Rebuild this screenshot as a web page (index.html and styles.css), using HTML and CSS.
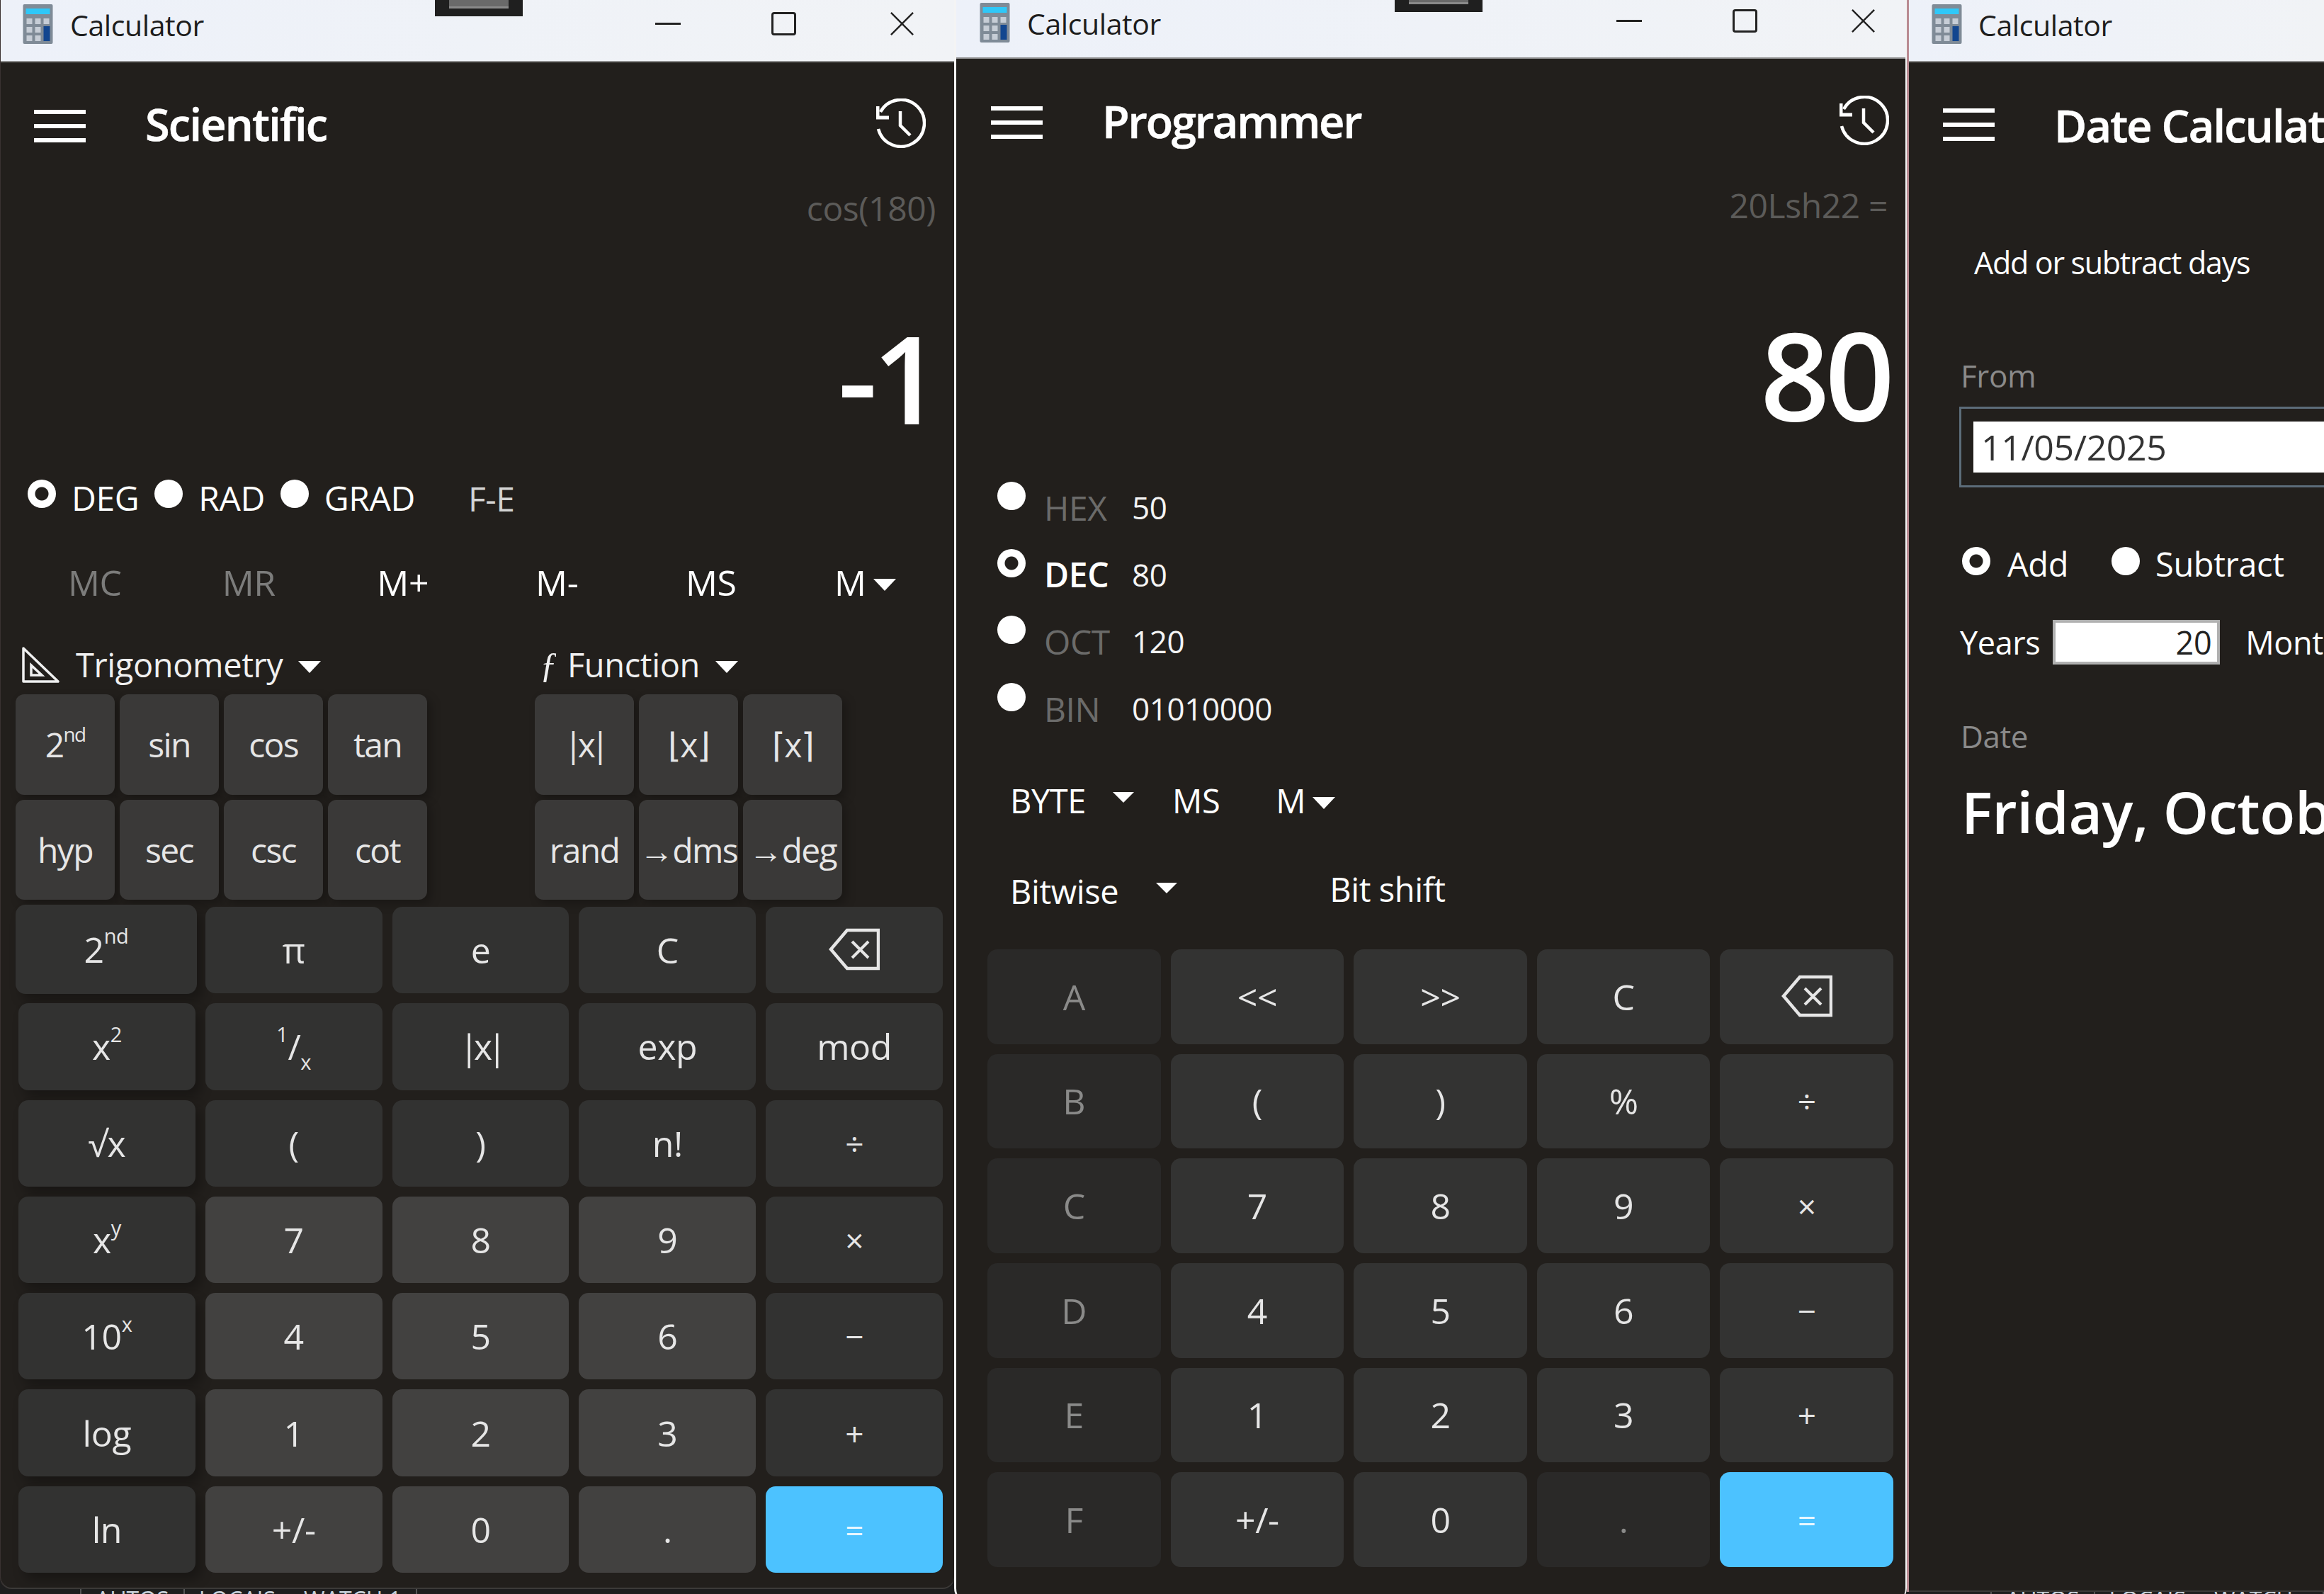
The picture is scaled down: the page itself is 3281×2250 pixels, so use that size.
FILE: index.html
```html
<!DOCTYPE html>
<html lang="en">
<head>
<meta charset="utf-8">
<title>Calculator</title>
<link rel="stylesheet" href="styles.css">
</head>
<body>
<svg class="defs" width="0" height="0" aria-hidden="true">
  <defs>
    <symbol id="i-calc" viewBox="0 0 42 56">
      <rect width="42" height="56" rx="2" fill="#7f8b97"/>
      <rect x="4" y="6" width="34" height="8" fill="#2fc8f8"/>
      <g fill="#c6cdd6">
        <rect x="5" y="20" width="8" height="8"/><rect x="17" y="20" width="8" height="8"/><rect x="29" y="20" width="8" height="8"/>
        <rect x="5" y="32" width="8" height="8"/><rect x="17" y="32" width="8" height="8"/>
        <rect x="5" y="44" width="8" height="8"/><rect x="17" y="44" width="8" height="8"/>
      </g>
      <rect x="29" y="31" width="9" height="21" fill="#12468f"/>
    </symbol>
    <symbol id="i-history" viewBox="0 0 70 70">
      <g fill="none" stroke="#fff" stroke-width="4.5">
        <path d="M6 19A33 33 0 1 1 3 43"/>
        <path d="M2 11V27H18" stroke-width="5"/>
        <path d="M34 18V38L48 52"/>
      </g>
    </symbol>
    <symbol id="i-back" viewBox="0 0 72 60">
      <g fill="none" stroke="#e6e6e6" stroke-width="4.5">
        <path d="M70 3V57H26L3 30 26 3Z"/>
        <path d="M33 19L56 42M56 19L33 42" stroke-width="4"/>
      </g>
    </symbol>
    <symbol id="i-trig" viewBox="0 0 55 53">
      <g fill="none" stroke="#f0f0f0" stroke-width="3.5">
        <path d="M3 3L52 50H3Z" stroke-linejoin="round"/>
        <path d="M14 27L29 41H14Z"/>
      </g>
    </symbol>
  </defs>
</svg>

<main class="desktop">
  <div class="behind behind-a"><span class="pipe"></span><span>AUTOS</span><span class="pipe"></span><span>LOCAIS</span><span class="watch">WATCH 1</span><span class="pipe"></span></div>
  <div class="behind behind-c"><span class="pipe"></span><span>AUTOS</span><span class="pipe"></span><span>LOCAIS</span><span class="watch">WATCH 1</span><span class="pipe"></span></div>

  <!-- Scientific -->
  <section class="win win-sci">
    <header class="titlebar tb-88">
      <svg class="app-icon"><use href="#i-calc"/></svg>
      <span class="app-name">Calculator</span>
      <span class="notch"><i></i></span>
      <span class="caption"><i class="cap-min"></i><i class="cap-max"></i><svg class="cap-close" viewBox="0 0 36 36"><path d="M1 1L35 35M35 1L1 35"/></svg></span>
    </header>
    <div class="head head-sci">
      <span class="burger"><i></i><i></i><i></i></span>
      <h1 class="mode">Scientific</h1>
      <svg class="history"><use href="#i-history"/></svg>
    </div>
    <div class="expr expr-sci">cos(180)</div>
    <div class="display display-sci">-1</div>
    <div class="angle">
      <span class="radio on"></span><span>DEG</span>
      <span class="radio"></span><span>RAD</span>
      <span class="radio"></span><span>GRAD</span>
      <span class="fe">F-E</span>
    </div>
    <div class="memory">
      <span class="dim">MC</span><span class="dim">MR</span><span>M+</span><span>M-</span><span>MS</span><span>M<i class="caret caret-m"></i></span>
    </div>
    <div class="menus">
      <span class="menu"><svg class="trig-icon"><use href="#i-trig"/></svg>Trigonometry<i class="caret"></i></span>
      <span class="menu"><em class="fn">ƒ</em>Function<i class="caret"></i></span>
    </div>
    <div class="flyouts">
      <div class="fly fly-4">
        <button class="fkey">2<sup>nd</sup></button><button class="fkey">sin</button><button class="fkey">cos</button><button class="fkey">tan</button>
        <button class="fkey">hyp</button><button class="fkey">sec</button><button class="fkey">csc</button><button class="fkey">cot</button>
      </div>
      <div class="fly fly-3">
        <button class="fkey abs">|x|</button><button class="fkey">⌊x⌋</button><button class="fkey">⌈x⌉</button>
        <button class="fkey">rand</button><button class="fkey">→dms</button><button class="fkey">→deg</button>
      </div>
    </div>
    <div class="keys keys-sci">
      <button class="key fn1 pop">2<sup>nd</sup></button><button class="key">π</button><button class="key">e</button><button class="key">C</button><button class="key"><svg class="back"><use href="#i-back"/></svg></button>
      <button class="key fn1">x<sup>2</sup></button><button class="key"><sup>1</sup>/<sub>x</sub></button><button class="key abs">|x|</button><button class="key">exp</button><button class="key">mod</button>
      <button class="key fn1">√x</button><button class="key">(</button><button class="key">)</button><button class="key">n!</button><button class="key op">÷</button>
      <button class="key fn1">x<sup>y</sup></button><button class="key num">7</button><button class="key num">8</button><button class="key num">9</button><button class="key op">×</button>
      <button class="key fn1">10<sup>x</sup></button><button class="key num">4</button><button class="key num">5</button><button class="key num">6</button><button class="key op">−</button>
      <button class="key fn1">log</button><button class="key num">1</button><button class="key num">2</button><button class="key num">3</button><button class="key op">+</button>
      <button class="key fn1">ln</button><button class="key num">+/-</button><button class="key num">0</button><button class="key num">.</button><button class="key eq">=</button>
    </div>
  </section>

  <!-- Programmer -->
  <section class="win win-prog">
    <header class="titlebar tb-83">
      <svg class="app-icon"><use href="#i-calc"/></svg>
      <span class="app-name">Calculator</span>
      <span class="notch"><i></i></span>
      <span class="caption"><i class="cap-min"></i><i class="cap-max"></i><svg class="cap-close" viewBox="0 0 36 36"><path d="M1 1L35 35M35 1L1 35"/></svg></span>
    </header>
    <div class="head head-prog">
      <span class="burger"><i></i><i></i><i></i></span>
      <h1 class="mode">Programmer</h1>
      <svg class="history"><use href="#i-history"/></svg>
    </div>
    <div class="expr expr-prog">20Lsh22 =</div>
    <div class="display display-prog">80</div>
    <div class="radix">
      <div class="radix-row"><span class="radio"></span><span class="radix-name">HEX</span><span class="radix-val">50</span></div>
      <div class="radix-row"><span class="radio on"></span><span class="radix-name cur">DEC</span><span class="radix-val">80</span></div>
      <div class="radix-row"><span class="radio"></span><span class="radix-name">OCT</span><span class="radix-val">120</span></div>
      <div class="radix-row"><span class="radio"></span><span class="radix-name">BIN</span><span class="radix-val">01010000</span></div>
    </div>
    <div class="word">
      <span>BYTE</span><i class="caret caret-s"></i><span class="word-ms">MS</span><span class="word-m">M</span><i class="caret caret-m"></i>
    </div>
    <div class="bits">
      <span>Bitwise</span><i class="caret caret-s"></i><span class="bit-shift">Bit shift</span>
    </div>
    <div class="keys keys-prog">
      <button class="key pkey off">A</button><button class="key pkey">&lt;&lt;</button><button class="key pkey">&gt;&gt;</button><button class="key pkey">C</button><button class="key pkey"><svg class="back"><use href="#i-back"/></svg></button>
      <button class="key pkey off">B</button><button class="key pkey">(</button><button class="key pkey">)</button><button class="key pkey">%</button><button class="key pkey op">÷</button>
      <button class="key pkey off">C</button><button class="key pkey">7</button><button class="key pkey">8</button><button class="key pkey">9</button><button class="key pkey op">×</button>
      <button class="key pkey off">D</button><button class="key pkey">4</button><button class="key pkey">5</button><button class="key pkey">6</button><button class="key pkey op">−</button>
      <button class="key pkey off">E</button><button class="key pkey">1</button><button class="key pkey">2</button><button class="key pkey">3</button><button class="key pkey op">+</button>
      <button class="key pkey off">F</button><button class="key pkey">+/-</button><button class="key pkey">0</button><button class="key pkey off">.</button><button class="key eq">=</button>
    </div>
  </section>

  <!-- Date calculation -->
  <section class="win win-date">
    <header class="titlebar tb-88">
      <svg class="app-icon"><use href="#i-calc"/></svg>
      <span class="app-name">Calculator</span>
    </header>
    <div class="head head-date">
      <span class="burger"><i></i><i></i><i></i></span>
      <h1 class="mode">Date Calculation</h1>
    </div>
    <div class="date-mode">Add or subtract days</div>
    <div class="date-label date-from">From</div>
    <div class="date-field"><span class="date-input">11/05/2025</span></div>
    <div class="addsub">
      <span class="radio on"></span><span>Add</span>
      <span class="radio"></span><span>Subtract</span>
    </div>
    <div class="span-row">
      <span>Years</span><span class="num-input">20</span><span class="months">Months</span>
    </div>
    <div class="date-label date-result">Date</div>
    <div class="result">Friday, October 5, 2045</div>
  </section>
</main>
</body>
</html>
```
FILE: styles.css
```css
* { box-sizing: border-box; }
html, body { margin: 0; padding: 0; background: #1e1e1e; }
.defs { position: absolute; }
.desktop {
  position: relative;
  width: 3281px;
  height: 2250px;
  overflow: hidden;
  background: #1e1e1e;
  font-family: "Open Sans", "Noto Sans", sans-serif;
  letter-spacing: -0.025em;
  color: #fff;
}

/* what shows underneath the windows */
.behind {
  position: absolute;
  display: flex;
  gap: 20px;
  align-items: flex-start;
  font: 32px/40px "Open Sans", sans-serif;
  letter-spacing: 0;
  color: #c9d3dc;
}
.behind-a { left: 113px; top: 2238px; }
.behind-c { left: 2810px; top: 2238px; }
.pipe { width: 2px; height: 30px; background: #555; }
.watch { margin-left: 20px; }

/* windows on the desktop */
.win {
  position: absolute;
  top: 0;
  display: flex;
  flex-direction: column;
  overflow: hidden;
  background: #221f1c;
}
.win-sci { left: 0; width: 1347px; height: 2243px; border-left: 1px solid #3a3231; border-radius: 0 0 16px 16px; box-shadow: inset 0 -2px 0 #3c3a38; }
.win-prog { left: 1347px; width: 1345px; height: 2262px; border-left: 3px solid #f4f4f4; border-right: 2px solid #f4f4f4; border-radius: 0 0 20px 20px; }
.win-date { left: 2692px; width: 589px; height: 2247px; border-left: 3px solid #b98b92; box-shadow: inset 0 -2px 0 #3c3a38; }

/* title bar */
.titlebar {
  position: relative;
  flex: none;
  display: flex;
  align-items: center;
  background: linear-gradient(90deg, #edf1f9, #f1f3f6);
  border-bottom: 2px solid #8d8d8d;
  color: #1d1d1d;
}
.tb-88 { height: 88px; padding-left: 31px; }
.tb-83 { height: 83px; padding-left: 33px; }
.app-icon { width: 43px; height: 56px; flex: none; margin-top: -18px; }
.app-name { font-size: 41px; margin-left: 24px; margin-top: -16px; }
.win-date .app-icon { margin-left: 1px; }
.win-date .app-name { margin-left: 23px; }
.notch { position: absolute; left: 613px; top: 0; width: 124px; height: 23px; background: #1f1f1f; display: flex; justify-content: center; }
.notch i { width: 84px; height: 12px; background: #6a6a6a; border-bottom: 3px solid #8a8a8a; }
.tb-83 .notch { left: 619px; height: 17px; }
.tb-83 .notch i { height: 6px; }
.caption { margin-left: auto; display: flex; align-items: center; margin-top: -20px; }
.tb-83 .caption { margin-top: -23px; padding-right: 42px; }
.tb-88 .caption { padding-right: 56px; }
.caption i, .caption svg { display: block; flex: none; }
.cap-min { width: 36px; height: 3px; background: #222; margin-right: 128px; }
.cap-max { width: 35px; height: 33px; border: 3px solid #222; border-radius: 4px; margin-right: 132px; }
.cap-close { width: 35px; height: 33px; }
.cap-close path { stroke: #222; stroke-width: 2.6; fill: none; }

/* head */
.head { flex: none; display: flex; align-items: center; }
.head-sci { height: 172px; padding: 0 40px 0 47px; }
.head-prog { height: 174px; padding: 0 23px 0 49px; }
.head-date { height: 180px; padding: 0 0 4px 48px; white-space: nowrap; }
.burger { display: flex; flex-direction: column; gap: 14px; width: 73px; flex: none; }
.head-sci .burger { margin-top: 8px; }
.head-prog .burger { margin-top: 6px; }
.burger i { display: block; height: 6px; background: #fff; }
.mode { margin: 0 0 0 84px; font-size: 63px; font-weight: 600; line-height: 1; letter-spacing: -0.028em; -webkit-text-stroke: .6px #fff; }
.head-prog .mode { letter-spacing: -0.034em; }
.history { width: 70px; height: 70px; margin-left: auto; flex: none; }

/* readouts */
.expr { flex: none; display: flex; align-items: center; justify-content: flex-end; font-size: 48px; color: #5c5b59; }
.expr-sci { height: 66px; padding-right: 26px; }
.expr-prog { height: 64px; padding-right: 25px; }
.display { flex: none; display: flex; align-items: center; justify-content: flex-end; font-size: 172px; font-weight: 600; line-height: 1; }
.display-sci { height: 340px; padding: 72px 24px 0 0; letter-spacing: -0.04em; }
.display-prog { height: 348px; padding: 64px 22px 0 0; letter-spacing: -0.04em; }

/* radios */
.radio { display: block; flex: none; width: 40px; height: 40px; border-radius: 50%; background: #fff; }
.radio.on { background: radial-gradient(circle, #221f1c 0 9px, #fff 10px); }
.angle { flex: none; height: 72px; padding-left: 38px; display: flex; align-items: center; gap: 22px; font-size: 48px; }
.angle .radio { margin: -10px 0 0 0; }
.fe { margin-left: 53px; color: #d4d4d4; padding-top: 3px; }

/* memory */
.memory { flex: none; margin-top: 38px; height: 92px; padding-left: 24px; display: grid; grid-template-columns: repeat(6, 217.5px); font-size: 50px; }
.memory span { display: flex; align-items: center; justify-content: center; }
.dim { color: #7c7c7b; }

/* carets */
.caret { display: inline-block; flex: none; width: 0; height: 0; border-left: 16px solid transparent; border-right: 16px solid transparent; border-top: 17px solid #fff; }
.caret-m { margin-left: 10px; margin-top: 6px; }
.caret-s { border-left-width: 15px; border-right-width: 15px; border-top-width: 15px; }

/* menus */
.menus { flex: none; margin-top: 38px; height: 60px; padding-left: 29px; display: grid; grid-template-columns: 732px 1fr; font-size: 47px; }
.menu { display: flex; align-items: center; color: #f0f0f0; }
.menu .caret { margin-left: 22px; margin-top: 6px; }
.trig-icon { width: 55px; height: 53px; margin-right: 22px; }
.fn { width: 39px; font-family: "Liberation Serif", serif; font-style: italic; font-size: 50px; }

/* flyouts */
.flyouts { flex: none; margin-top: 14px; height: 290px; padding-left: 21px; display: flex; gap: 152px; }
.fly { display: grid; grid-template-rows: 141.5px 141.5px; gap: 7px; }
.fly-4 { grid-template-columns: repeat(4, 140px); }
.fly-3 { grid-template-columns: repeat(3, 140px); }

/* keys */
button { font: inherit; letter-spacing: inherit; color: #e6e6e6; border: 0; padding: 0; }
.fkey { background: #3a3938; border-radius: 12px; font-size: 48px; box-shadow: 6px 6px 14px rgba(0, 0, 0, .25); white-space: nowrap; letter-spacing: -0.035em; }
.keys { flex: none; display: grid; gap: 14px; }
.keys-sci { margin-top: 10px; margin-left: 25px; width: 1305px; height: 940px; grid-template-columns: repeat(5, 1fr); grid-template-rows: repeat(7, 1fr); }
.keys-prog { margin-left: 44px; width: 1279px; height: 872px; grid-template-columns: repeat(5, 1fr); grid-template-rows: repeat(6, 1fr); }
.key { background: #323231; border-radius: 14px; font-size: 50px; display: flex; align-items: center; justify-content: center; }
.num { background: #424140; }
.fn1 { box-shadow: 8px 10px 16px rgba(0, 0, 0, .28); }
.pop { margin: -3px -2px -1px -4px; }
.op { font-size: 46px; }
.eq { background: #4cc2ff; color: #e9f7ff; font-size: 46px; }
.pkey { background: #333332; }
.pkey.off { background: #2a2928; color: #8a8a89; }
.back { width: 72px; height: 60px; margin-top: -2px; }
.abs { letter-spacing: -0.14em; }
sup, sub { font-size: .58em; line-height: 0; }
sup { vertical-align: .95em; align-self: flex-start; margin-top: 44px; }
.fkey sup { margin-top: 0; vertical-align: .8em; }
sub { vertical-align: -.3em; align-self: flex-end; margin-bottom: 40px; }

/* programmer */
.radix { flex: none; height: 378px; }
.radix-row { height: 94.6px; display: flex; align-items: center; padding-left: 58px; }
.radix-row .radio { margin: -32px 26px 0 0; }
.radix-name { width: 124px; font-size: 48px; color: #6b6b6a; }
.radix-name.cur { color: #fff; font-weight: 600; }
.radix-val { font-size: 44px; color: #f4f4f4; }
.word, .bits { flex: none; display: flex; align-items: center; padding-left: 76px; font-size: 47px; }
.word { margin-top: 53px; height: 60px; }
.word .caret-s { margin: -10px 0 0 38px; }
.word-ms { margin-left: 54px; }
.word-m { margin-left: 79px; }
.word .caret-m { margin: 6px 0 0 10px; }
.bits { margin-top: 68px; height: 60px; }
.bits .caret-s { margin: -10px 0 0 53px; }
.bit-shift { margin-left: 215px; margin-top: -6px; }
.win-prog .keys-prog { margin-top: 52px; }

/* date */
.date-mode { flex: none; height: 60px; margin: 72px 0 0 92px; display: flex; align-items: center; font-size: 43px; letter-spacing: -0.03em; white-space: nowrap; }
.date-label { flex: none; margin-left: 73px; font-size: 44px; line-height: 60px; height: 60px; color: #8a8a8a; }
.date-from { margin-top: 100px; }
.date-field { flex: none; margin: 14px -40px 0 71px; height: 114px; border: 3px solid #5c6c79; padding: 18px 0 18px 17px; }
.date-input { display: block; height: 72px; background: #fff; color: #333; font-size: 50px; line-height: 72px; padding-left: 11px; }
.addsub { flex: none; margin: 78px 0 0 75px; height: 60px; display: flex; align-items: center; font-size: 47px; white-space: nowrap; }
.addsub .radio { margin-top: -8px; }
.addsub .radio:nth-child(1) { margin-right: 24px; }
.addsub .radio:nth-child(3) { margin: -8px 22px 0 61px; }
.span-row { flex: none; margin: 49px 0 0 72px; height: 63px; display: flex; align-items: center; font-size: 45px; white-space: nowrap; }
.num-input { flex: none; width: 236px; height: 63px; margin-left: 18px; background: #fff; border: 4px solid #b0b0b0; color: #222; font-size: 45px; line-height: 55px; text-align: right; padding-right: 8px; }
.months { margin-left: 36px; }
.date-result { margin-top: 71px; }
.result { flex: none; margin: 26px 0 0 74px; font-size: 82px; font-weight: 600; line-height: 100px; white-space: nowrap; }
```
